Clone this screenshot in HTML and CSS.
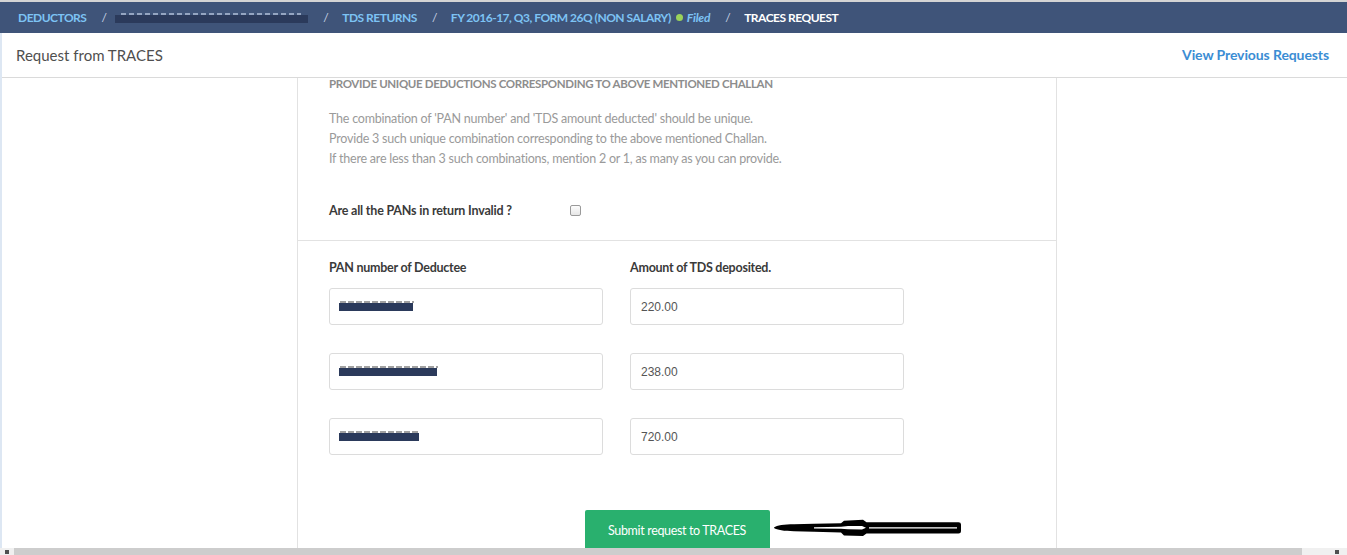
FILE: index.html
```html
<!DOCTYPE html>
<html>
<head>
<meta charset="utf-8">
<link rel="stylesheet" href="styles.css">
</head>
<body>
<div class="page">
  <div class="topline"></div>
  <nav class="crumbs">
    <a class="crumb">DEDUCTORS</a>
    <span class="sep">/</span>
    <span class="redact-wrap"><span class="ghost-bar"></span><span class="redact"></span></span>
    <span class="sep">/</span>
    <a class="crumb">TDS RETURNS</a>
    <span class="sep">/</span>
    <a class="crumb">FY 2016-17, Q3, FORM 26Q (NON SALARY)</a>
    <span class="dot"></span>
    <a class="crumb filed">Filed</a>
    <span class="sep">/</span>
    <span class="crumb current">TRACES REQUEST</span>
  </nav>
  <div class="main">
    <header class="head">
      <h1 class="title">Request from TRACES</h1>
      <a class="prev">View Previous Requests</a>
    </header>
    <div class="content">
      <section class="panel">
        <div class="intro">
          <h2 class="heading">PROVIDE UNIQUE DEDUCTIONS CORRESPONDING TO ABOVE MENTIONED CHALLAN</h2>
          <p class="note">The combination of 'PAN number' and 'TDS amount deducted' should be unique.<br>Provide 3 such unique combination corresponding to the above mentioned Challan.<br>If there are less than 3 such combinations, mention 2 or 1, as many as you can provide.</p>
          <div class="check-row">
            <span class="check-label">Are all the PANs in return Invalid ?</span>
            <span class="checkbox"></span>
          </div>
        </div>
        <div class="form">
          <div class="grid">
            <div class="label">PAN number of Deductee</div>
            <div class="label">Amount of TDS deposited.</div>
            <div class="field"><span class="pan-ghost w74"></span><span class="pan-redact w74"></span></div>
            <div class="field val">220.00</div>
            <div class="field"><span class="pan-ghost w98"></span><span class="pan-redact w98"></span></div>
            <div class="field val">238.00</div>
            <div class="field"><span class="pan-ghost w80"></span><span class="pan-redact w80"></span></div>
            <div class="field val">720.00</div>
          </div>
          <div class="actions">
            <button class="submit">Submit request to TRACES</button>
            <svg class="arrow" width="188" height="18" viewBox="0 0 188 18">
              <path d="M0 8.5 C3 6.2 10 5.4 20 5.2 L40 4.8 L67 4.2 L70 1.8 L89 0.8 L92.5 3.2 L184.5 3.2 Q187 3.2 187 5.5 L187 12.2 Q187 14.4 184.5 14.4 L92.5 14.4 L89 17 L70 16.6 L67 13.6 L40 12.8 L20 12.2 C10 12 3 11 0 9 Z" fill="#000"/>
              <path d="M40 8.2 L67 7.7 L74 7.1 L88 7.1 L92 8.7 L88 10.4 L74 10.3 L67 9.8 L40 9.4 Z" fill="#fff"/>
              <path d="M95 8.2 L183 8.2 L183 9.4 L95 9.4 Z" fill="#fff"/>
            </svg>
          </div>
        </div>
      </section>
    </div>
  </div>
  <div class="hscroll">
    <span class="sbtn left"><span class="tri"></span></span>
    <span class="thumb"></span>
    <span class="sbtn right"><span class="tri"></span></span>
  </div>
</div>
</body>
</html>
```

FILE: styles.css
```css
html, body {
  margin: 0;
  padding: 0;
}
body {
  width: 1347px;
  height: 555px;
  overflow: hidden;
  background: #fff;
  font-family: "Lato", "Open Sans", sans-serif;
}
.page {
  height: 555px;
  display: flex;
  flex-direction: column;
}
.topline {
  height: 2px;
  background: #d4d4d4;
  flex: none;
}
.crumbs {
  flex: none;
  height: 31px;
  background: #3f5479;
  display: flex;
  align-items: center;
  padding-left: 18px;
  font-size: 12px;
  font-weight: 700;
  letter-spacing: -0.5px;
  white-space: nowrap;
}
.crumb {
  color: #7dc3f4;
}
.crumb.current {
  color: #fff;
}
.crumb.filed {
  font-style: italic;
  font-weight: 700;
  letter-spacing: -0.2px;
}
.sep {
  color: #c9d4e6;
  font-weight: 400;
  margin: 0 14px 0 15px;
}
.redact-wrap {
  position: relative;
  display: inline-block;
  width: 193px;
  height: 31px;
  margin-left: -5px;
}
.ghost-bar {
  position: absolute;
  left: 6px;
  top: 11px;
  width: 180px;
  height: 3px;
  background: repeating-linear-gradient(90deg, #aab9d3 0 5px, transparent 5px 8px);
  opacity: 0.8;
}
.redact {
  position: absolute;
  left: 0;
  top: 13px;
  width: 193px;
  height: 8px;
  background: #2b3a5b;
}
.dot {
  width: 7px;
  height: 7px;
  border-radius: 50%;
  background: #9bd35a;
  margin: 0 4px 0 5px;
}
.main {
  flex: 1;
  display: flex;
  flex-direction: column;
  border-left: 2px solid #dde7f3;
  min-height: 0;
}
.head {
  flex: none;
  height: 44px;
  border-bottom: 1px solid #dadada;
  display: flex;
  align-items: center;
  justify-content: space-between;
  padding: 0 18px 0 14px;
}
.title {
  margin: 0;
  font-size: 15px;
  font-weight: 400;
  color: #4f4f4f;
}
.prev {
  color: #3b8dd4;
  font-size: 14px;
  font-weight: 700;
  letter-spacing: -0.1px;
  margin-top: -2px;
}
.content {
  flex: 1;
  min-height: 0;
  overflow: hidden;
  padding-left: 5px;
}
.panel {
  width: 758px;
  margin: 0 auto;
  height: 100%;
  border-left: 1px solid #e2e2e2;
  border-right: 1px solid #e2e2e2;
  display: flex;
  flex-direction: column;
}
.intro {
  flex: none;
  padding: 0 31px;
  border-bottom: 1px solid #e2e2e2;
  height: 162px;
}
.heading {
  margin: 0;
  font-size: 11.5px;
  line-height: 12px;
  font-weight: 700;
  color: #8d8d8d;
  letter-spacing: -0.35px;
}
.note {
  margin: 19px 0 0;
  font-size: 12.5px;
  line-height: 20px;
  color: #9a9a9a;
  letter-spacing: -0.22px;
}
.check-row {
  display: flex;
  align-items: center;
  margin-top: 31px;
  height: 20px;
}
.check-label {
  width: 241px;
  font-size: 12.5px;
  font-weight: 700;
  color: #3a3a3a;
  letter-spacing: -0.2px;
}
.checkbox {
  width: 9px;
  height: 9px;
  border: 1px solid #9a9a9a;
  border-radius: 2px;
  background: linear-gradient(#fdfdfd, #e6e6e6);
}
.form {
  padding: 19px 31px 0;
  flex: 1;
  display: flex;
  flex-direction: column;
}
.grid {
  display: grid;
  grid-template-columns: 274px 274px;
  grid-template-rows: 0 37px 37px 37px;
  column-gap: 27px;
  row-gap: 28px;
}
.label {
  font-size: 12.5px;
  font-weight: 700;
  color: #3a3a3a;
  line-height: 16px;
  height: 16px;
  align-self: start;
  letter-spacing: -0.25px;
}
.field {
  box-sizing: border-box;
  height: 37px;
  border: 1px solid #dcdcdc;
  border-radius: 3px;
  display: flex;
  align-items: center;
  padding-left: 10px;
  font-family: "Liberation Sans", Arial, sans-serif;
  font-size: 12px;
  color: #555;
  position: relative;
}
.pan-ghost {
  position: absolute;
  left: 10px;
  top: 12px;
  height: 2px;
  background: repeating-linear-gradient(90deg, #555 0 6px, transparent 6px 8px);
  opacity: 0.55;
}
.pan-redact {
  position: absolute;
  left: 9px;
  top: 14px;
  height: 8px;
  background: #2b3a5b;
}
.w74 { width: 74px; }
.w98 { width: 98px; }
.w80 { width: 80px; }
.actions {
  margin-top: 55px;
  display: flex;
  justify-content: center;
  position: relative;
}
.submit {
  width: 185px;
  height: 40px;
  border: 0;
  border-radius: 2px 2px 0 0;
  background: #29b06e;
  color: #fff;
  font-family: "Lato", "Open Sans", sans-serif;
  font-size: 12.5px;
  letter-spacing: -0.35px;
  padding: 0;
}
.arrow {
  position: absolute;
  left: 445px;
  top: 9px;
}
.hscroll {
  flex: none;
  height: 7px;
  display: flex;
  background: #f0f0f0;
}
.sbtn {
  background: #f0f0f0;
  display: flex;
  align-items: center;
  justify-content: center;
}
.sbtn.left { width: 14px; }
.sbtn.right { width: 45px; justify-content: flex-end; padding-right: 8px; box-sizing: border-box; }
.thumb {
  flex: 1;
  background: #cdcdcd;
}
.tri {
  width: 4px;
  height: 4px;
  background: #505050;
}
```
